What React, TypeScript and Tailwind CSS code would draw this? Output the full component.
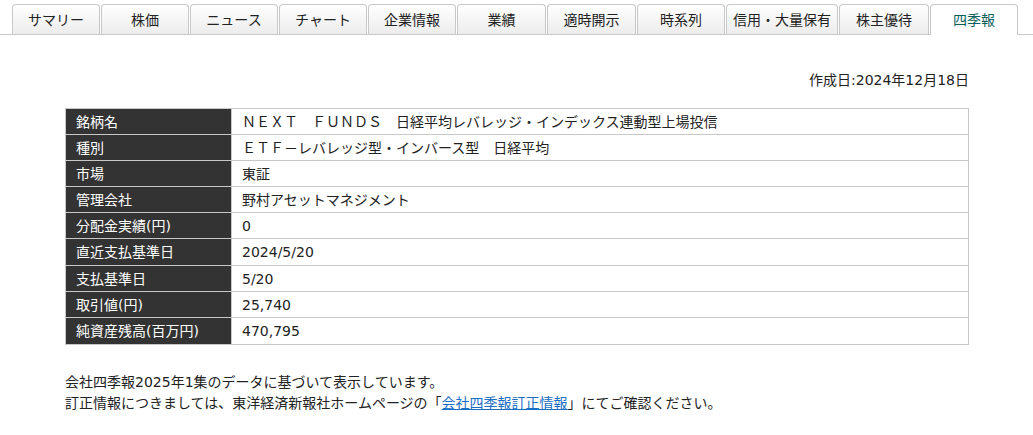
import React from "react"

const font = { fontFamily: '"DejaVu Sans", "Noto Sans CJK JP", sans-serif' }

const tabs = [
  { label: "サマリー", w: "w-[88px]" },
  { label: "株価", w: "w-[88px]" },
  { label: "ニュース", w: "w-[88px]" },
  { label: "チャート", w: "w-[88px]" },
  { label: "企業情報", w: "w-[88px]" },
  { label: "業績", w: "w-[89px]" },
  { label: "適時開示", w: "w-[89px]" },
  { label: "時系列", w: "w-[88px]" },
  { label: "信用・大量保有", w: "w-[112px]" },
  { label: "株主優待", w: "w-[90px]" },
  { label: "四季報", w: "w-[88px]", active: true },
]

const rows = [
  ["銘柄名", "ＮＥＸＴ　ＦＵＮＤＳ　日経平均レバレッジ・インデックス連動型上場投信"],
  ["種別", "ＥＴＦ－レバレッジ型・インバース型　日経平均"],
  ["市場", "東証"],
  ["管理会社", "野村アセットマネジメント"],
  ["分配金実績(円)", "0"],
  ["直近支払基準日", "2024/5/20"],
  ["支払基準日", "5/20"],
  ["取引値(円)", "25,740"],
  ["純資産残高(百万円)", "470,795"],
]

export default function App() {
  return (
    <div className="w-[1033px] h-[435px] bg-white text-[14px] text-[#222]" style={font}>
      <div className="flex items-end gap-px pl-[12px] pt-[4px] border-b border-[#c8c8c8]">
        {tabs.map((t) => (
          <div
            key={t.label}
            className={
              t.active
                ? `${t.w} h-[31px] -mb-px flex items-center justify-center rounded-t-[4px] border border-b-0 border-[#c8c8c8] bg-white text-[#0b5e5e]`
                : `${t.w} h-[30px] flex items-center justify-center rounded-t-[4px] border border-b-0 border-[#c8c8c8] bg-gradient-to-b from-white to-[#ececec] text-[#222]`
            }
          >
            <span className="leading-none">{t.label}</span>
          </div>
        ))}
      </div>

      <div className="pl-[65px] pr-[64px]">
        <div className="text-right mt-[35px] leading-[20px]">作成日:2024年12月18日</div>

        <table className="w-full mt-[18px] border-collapse border border-[#c8c8c8]">
          <tbody>
            {rows.map(([k, v], i) => (
              <tr key={k} className={i === 5 || i === 8 ? "h-[27px]" : "h-[26px]"}>
                <td className="w-[166px] bg-[#333333] text-white pl-[10px] border border-[#c8c8c8] leading-[18px] align-middle">
                  {k}
                </td>
                <td className="pl-[10px] border border-[#c8c8c8] leading-[18px] align-middle">{v}</td>
              </tr>
            ))}
          </tbody>
        </table>

        <div className="mt-[27px] leading-[21px]">
          <p>会社四季報2025年1集のデータに基づいて表示しています。</p>
          <p>
            訂正情報につきましては、東洋経済新報社ホームページの「
            <a href="#" className="text-[#1a6ec4] underline">会社四季報訂正情報</a>
            」にてご確認ください。
          </p>
        </div>
      </div>
    </div>
  )
}
